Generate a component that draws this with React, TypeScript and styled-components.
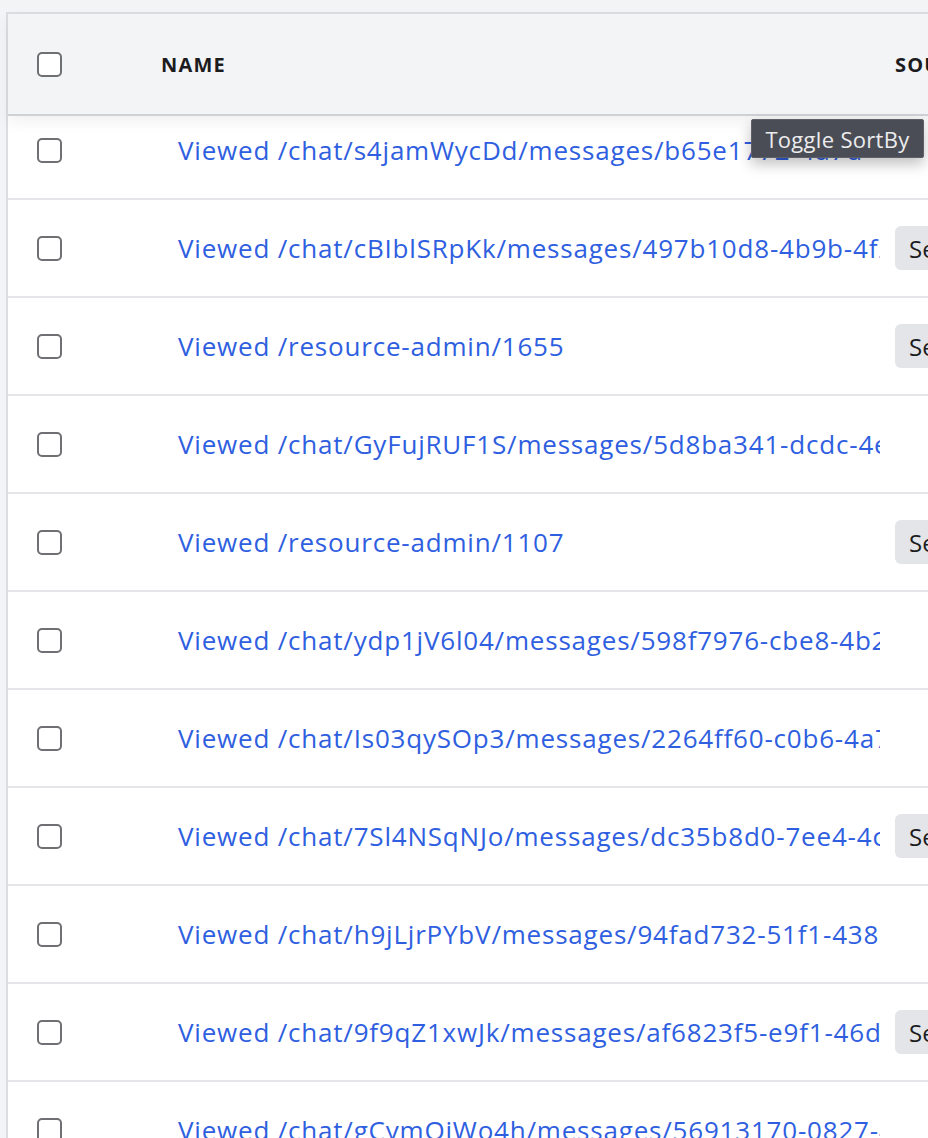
import React from 'react';
import styled, { createGlobalStyle } from 'styled-components';

const GlobalStyle = createGlobalStyle`
  html, body {
    margin: 0;
    padding: 0;
    background: #ffffff;
    overflow: hidden;
  }

  body {
    font-family: 'Open Sans', 'Liberation Sans', sans-serif;
    color: #111827;
  }
`;

const Page = styled.div`
  width: 928px;
  height: 1138px;
  overflow: hidden;
  background: #f3f4f6;
  padding-top: 12px;
  box-sizing: border-box;
`;

const Table = styled.div`
  margin-left: 6px;
  width: 1400px;
  border-left: 2px solid #dcdde1;
  border-top: 2px solid #dcdde1;
  background: #ffffff;
`;

const HeaderRow = styled.div`
  position: relative;
  z-index: 1;
  display: grid;
  grid-template-columns: 137px 735px 1fr;
  align-items: center;
  height: 100px;
  background: #f3f4f6;
  border-bottom: 2px solid #cfd1d6;
  box-shadow: 0 6px 14px rgba(17, 24, 39, 0.06);
`;

const HeaderCell = styled.div<{ $pad: number }>`
  padding-left: ${(p) => p.$pad}px;
  font-size: 20px;
  font-weight: 700;
  letter-spacing: 1.2px;
  color: #1c1c1e;
  white-space: nowrap;
  overflow: hidden;
`;

const Body = styled.div`
  margin-top: -14px;
`;

const Row = styled.div`
  display: grid;
  grid-template-columns: 137px 735px 1fr;
  align-items: center;
  height: 96px;
  border-bottom: 2px solid #e5e6ea;
`;

const CheckCell = styled.div`
  padding-left: 29px;
  display: flex;
  align-items: center;
`;

const Checkbox = styled.span`
  display: inline-block;
  width: 21px;
  height: 21px;
  border: 2px solid #6f7073;
  border-radius: 5px;
  background: #ffffff;
`;

const NameCell = styled.div`
  overflow: hidden;
  white-space: nowrap;
  padding-left: 33px;
`;

const NameLink = styled.a`
  font-size: 26px;
  color: #2f5fe0;
  text-decoration: none;
  letter-spacing: 0.8px;
`;

const SourceCell = styled.div`
  padding-left: 15px;
  display: flex;
  align-items: center;
`;

const Badge = styled.span`
  display: inline-flex;
  align-items: center;
  height: 44px;
  padding: 0 14px;
  border-radius: 6px;
  background: #e4e5e8;
  font-size: 24px;
  color: #1c1c1e;
`;

const Tooltip = styled.div`
  position: absolute;
  top: 119px;
  left: 751px;
  z-index: 2;
  width: 173px;
  box-sizing: border-box;
  height: 39px;
  display: flex;
  align-items: center;
  justify-content: center;
  background: #4a4d55;
  border: 1px solid #5d6068;
  border-radius: 2px;
  color: #ececee;
  font-size: 22px;
  letter-spacing: 0.3px;
  box-shadow: 0 6px 14px rgba(0, 0, 0, 0.25);
  white-space: nowrap;
`;

const rows: { name: string; source?: string }[] = [
  { name: 'Viewed /chat/s4jamWycDd/messages/b65e1772-4a7d-4c1e-9f0b-2d7a1e5c8b34' },
  { name: 'Viewed /chat/cBIblSRpKk/messages/497b10d8-4b9b-4f2a-8c61-0e3d9b7a5f12', source: 'Segment' },
  { name: 'Viewed /resource-admin/1655', source: 'Segment' },
  { name: 'Viewed /chat/GyFujRUF1S/messages/5d8ba341-dcdc-4e8b-a1f7-63c2b9d04e51' },
  { name: 'Viewed /resource-admin/1107', source: 'Segment' },
  { name: 'Viewed /chat/ydp1jV6l04/messages/598f7976-cbe8-4b2d-9e13-7a4c6f1d8e20' },
  { name: 'Viewed /chat/Is03qySOp3/messages/2264ff60-c0b6-4a7e-b5d2-19f8e3c6a047' },
  { name: 'Viewed /chat/7Sl4NSqNJo/messages/dc35b8d0-7ee4-4c9a-8f21-5b6e0d3a7c19', source: 'Segment' },
  { name: 'Viewed /chat/h9jLjrPYbV/messages/94fad732-51f1-438c-a6e9-2d0b7f4c1e85' },
  { name: 'Viewed /chat/9f9qZ1xwJk/messages/af6823f5-e9f1-46d3-b8a0-7c2e5f9d1b64', source: 'Segment' },
  { name: 'Viewed /chat/gCymOjWo4h/messages/56913170-0827-4b1f-9d6c-3e8a2f0b7d15' },
];

const App = (): JSX.Element => {
  return (
    <>
      <GlobalStyle />
      <Page>
        <Table>
          <HeaderRow>
            <CheckCell>
              <Checkbox />
            </CheckCell>
            <HeaderCell $pad={16}>NAME</HeaderCell>
            <HeaderCell $pad={15}>SOURCE</HeaderCell>
          </HeaderRow>
          <Body>
            {rows.map((row) => (
              <Row key={row.name}>
                <CheckCell>
                  <Checkbox />
                </CheckCell>
                <NameCell>
                  <NameLink href='#'>{row.name}</NameLink>
                </NameCell>
                <SourceCell>{row.source && <Badge>{row.source}</Badge>}</SourceCell>
              </Row>
            ))}
          </Body>
        </Table>
        <Tooltip>Toggle SortBy</Tooltip>
      </Page>
    </>
  );
};

export default App;
